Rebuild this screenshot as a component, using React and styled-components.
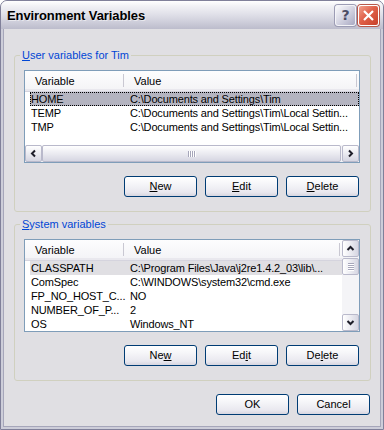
import React from "react";
import styled, { createGlobalStyle } from "styled-components";

const GlobalStyle = createGlobalStyle`
  html, body {
    margin: 0;
    padding: 0;
    background: #ffffff;
  }
  body {
    font-family: "Liberation Sans", Arial, sans-serif;
    font-size: 11px;
    color: #000;
  }
  * {
    box-sizing: border-box;
  }
`;

const Window = styled.div`
  width: 384px;
  height: 430px;
  display: flex;
  flex-direction: column;
  border: 1px solid #80809a;
  border-radius: 7px 7px 0 0;
  background: #cdcdd9;
  overflow: hidden;
`;

const TitleBar = styled.div`
  height: 28px;
  flex: none;
  display: flex;
  align-items: center;
  padding: 0 4px 0 6px;
  background: linear-gradient(
    to bottom,
    #ffffff 0%,
    #f1f1f5 18%,
    #e2e2ea 45%,
    #d0d0dc 72%,
    #bcbccc 100%
  );
`;

const Title = styled.div`
  flex: 1;
  font-size: 13px;
  font-weight: bold;
  color: #000;
  letter-spacing: -0.1px;
  text-shadow: 1px 1px 0 rgba(255, 255, 255, 0.5);
`;

const CaptionButton = styled.div`
  width: 21px;
  height: 21px;
  margin-left: 2px;
  display: flex;
  align-items: center;
  justify-content: center;
  border-radius: 3px;
  border: 1px solid ${(p) => (p.$close ? "#ffffff" : "#f4f4f8")};
  box-shadow: 0 0 0 1px ${(p) => (p.$close ? "#b8584a" : "#9c9cb4")};
  background: ${(p) =>
    p.$close
      ? "linear-gradient(135deg, #f2a08c 0%, #e0614a 45%, #c8402a 100%)"
      : "linear-gradient(135deg, #fafafc 0%, #d4d4e2 50%, #a9a9c2 100%)"};
  color: #4c4c64;
  font-family: "DejaVu Sans", sans-serif;
  font-weight: bold;
  font-size: 14px;
`;

const Body = styled.div`
  flex: 1;
  margin: 0 2px 2px;
  border: 1px solid #a6a6ba;
  border-top: none;
  background: #e0dfe3;
  padding: 19px 9px 0 10px;
  display: flex;
  flex-direction: column;
`;

const GroupBox = styled.fieldset`
  margin: 0;
  min-width: 0;
  height: 164px;
  padding: 8px 10px 14px 9px;
  border: 1px solid #d0d0bf;
  border-radius: 3px;
  display: flex;
  flex-direction: column;
  & + & {
    margin-top: 5px;
  }
`;

const Legend = styled.legend`
  margin-left: -4px;
  padding: 0 2px;
  line-height: 14px;
  font-size: 11px;
  color: #0046d5;
`;

const ListView = styled.div`
  height: 93px;
  flex: none;
  border: 1px solid #7f9db9;
  background: #ffffff;
  display: flex;
  flex-direction: ${(p) => (p.$vertical ? "row" : "column")};
  overflow: hidden;
`;

const Pane = styled.div`
  flex: 1;
  min-width: 0;
  display: flex;
  flex-direction: column;
`;

const Header = styled.div`
  height: 21px;
  flex: none;
  display: flex;
  background: linear-gradient(to bottom, #fdfdfe, #f3f3f6);
  border-bottom: 1px solid #d5d4de;
  box-shadow: inset 0 -2px 0 #e9e8ee;
`;

const HeaderCell = styled.div`
  position: relative;
  width: ${(p) => p.$w}px;
  flex: none;
  padding-left: 10px;
  line-height: 20px;
  &::after {
    content: "";
    position: absolute;
    right: 0;
    top: 3px;
    bottom: 4px;
    width: 1px;
    background: #c9c8d2;
  }
`;

const Rows = styled.div`
  flex: 1;
  overflow: hidden;
`;

const Row = styled.div`
  display: flex;
  height: 14px;
  line-height: 14px;
  margin-left: 5px;
  white-space: nowrap;
  letter-spacing: -0.15px;
  background: ${(p) =>
    p.$sel === "focus" ? "#b4b4c0" : p.$sel === "inactive" ? "#e0dfe3" : "transparent"};
  outline: ${(p) => (p.$sel === "focus" ? "1px dotted #000" : "none")};
  outline-offset: -1px;
`;

const Cell = styled.div`
  width: ${(p) => (p.$w ? `${p.$w}px` : "auto")};
  flex: ${(p) => (p.$w ? "none" : "1")};
  min-width: 0;
  padding-left: 1px;
  overflow: hidden;
  text-overflow: ellipsis;
`;

const ScrollBar = styled.div`
  flex: none;
  display: flex;
  flex-direction: ${(p) => (p.$vertical ? "column" : "row")};
  ${(p) => (p.$vertical ? "width: 17px;" : "height: 17px;")}
  background: #f4f4f7;
`;

const ScrollPart = styled.div`
  flex: none;
  width: ${(p) => (p.$grow && !p.$vertical ? "auto" : "17px")};
  height: ${(p) => (p.$grow && p.$vertical ? "auto" : "17px")};
  ${(p) => (p.$grow ? "flex: 1;" : "")}
  display: flex;
  align-items: center;
  justify-content: center;
  border: 1px solid #b9b9cb;
  border-radius: 2px;
  background: ${(p) =>
    p.$vertical
      ? "linear-gradient(to right, #ffffff, #ebebf1 50%, #d6d6e2)"
      : "linear-gradient(to bottom, #ffffff, #ebebf1 50%, #d6d6e2)"};
`;

const Track = styled.div`
  flex: 1;
`;

const ButtonRow = styled.div`
  display: flex;
  justify-content: flex-end;
  gap: 8px;
  margin-top: 13px;
  padding-right: 1px;
`;

const Button = styled.button`
  width: 73px;
  height: 21px;
  padding: 0;
  border: 1px solid #003c74;
  border-radius: 3px;
  background: linear-gradient(
    to bottom,
    #ffffff 0%,
    #f6f6f9 35%,
    #e9e8ef 80%,
    #d7d6e0 100%
  );
  font-family: inherit;
  font-size: 11px;
  color: #000;
  line-height: 19px;
`;

const Arrow = ({ dir }) => {
  const rot = { left: 180, right: 0, up: -90, down: 90 }[dir];
  return (
    <svg width="9" height="9" viewBox="0 0 9 9" style={{ transform: `rotate(${rot}deg)` }}>
      <path d="M3 1.5 L6 4.5 L3 7.5" fill="none" stroke="#1e1e2a" strokeWidth="2" />
    </svg>
  );
};

const Grip = ({ vertical }) => (
  <svg width="8" height="8" viewBox="0 0 8 8" style={{ transform: vertical ? "rotate(90deg)" : "none" }}>
    {[0, 2, 4, 6].map((x) => (
      <g key={x}>
        <rect x={x} y="1" width="1" height="6" fill="#a6a6ba" />
        <rect x={x + 1} y="1" width="1" height="6" fill="#ffffff" />
      </g>
    ))}
  </svg>
);

const userVars = [
  ["HOME", "C:\\Documents and Settings\\Tim", "focus"],
  ["TEMP", "C:\\Documents and Settings\\Tim\\Local Settin..."],
  ["TMP", "C:\\Documents and Settings\\Tim\\Local Settin..."],
];

const systemVars = [
  ["CLASSPATH", "C:\\Program Files\\Java\\j2re1.4.2_03\\lib\\...", "inactive"],
  ["ComSpec", "C:\\WINDOWS\\system32\\cmd.exe"],
  ["FP_NO_HOST_C...", "NO"],
  ["NUMBER_OF_P...", "2"],
  ["OS", "Windows_NT"],
];

function VarRows({ items }) {
  return (
    <Rows>
      {items.map(([name, value, sel]) => (
        <Row key={name} $sel={sel}>
          <Cell $w={99}>{name}</Cell>
          <Cell>{value}</Cell>
        </Row>
      ))}
    </Rows>
  );
}

function ListHeader({ valueWidth }) {
  return (
    <Header>
      <HeaderCell $w={99}>Variable</HeaderCell>
      <HeaderCell $w={valueWidth}>Value</HeaderCell>
    </Header>
  );
}

function VarButtons({ keys }) {
  return (
    <ButtonRow>
      <Button>{keys[0]}</Button>
      <Button>{keys[1]}</Button>
      <Button>{keys[2]}</Button>
    </ButtonRow>
  );
}

export default function App() {
  return (
    <>
      <GlobalStyle />
      <Window>
        <TitleBar>
          <Title>Environment Variables</Title>
          <CaptionButton>?</CaptionButton>
          <CaptionButton $close>
            <svg width="13" height="13" viewBox="0 0 13 13">
              <path d="M2 2 L11 11 M11 2 L2 11" stroke="#ffffff" strokeWidth="2.2" />
            </svg>
          </CaptionButton>
        </TitleBar>
        <Body>
          <GroupBox>
            <Legend>
              <u>U</u>ser variables for Tim
            </Legend>
            <ListView>
              <ListHeader valueWidth={233} />
              <VarRows items={userVars} />
              <ScrollBar>
                <ScrollPart>
                  <Arrow dir="left" />
                </ScrollPart>
                <ScrollPart $grow style={{ marginRight: 1 }}>
                  <Grip />
                </ScrollPart>
                <ScrollPart>
                  <Arrow dir="right" />
                </ScrollPart>
              </ScrollBar>
            </ListView>
            <VarButtons
              keys={[
                <><u>N</u>ew</>,
                <><u>E</u>dit</>,
                <><u>D</u>elete</>,
              ]}
            />
          </GroupBox>
          <GroupBox>
            <Legend>
              <u>S</u>ystem variables
            </Legend>
            <ListView $vertical>
              <Pane>
                <ListHeader valueWidth={216} />
                <VarRows items={systemVars} />
              </Pane>
              <ScrollBar $vertical>
                <ScrollPart $vertical>
                  <Arrow dir="up" />
                </ScrollPart>
                <ScrollPart $vertical style={{ marginTop: 1 }}>
                  <Grip vertical />
                </ScrollPart>
                <Track />
                <ScrollPart $vertical>
                  <Arrow dir="down" />
                </ScrollPart>
              </ScrollBar>
            </ListView>
            <VarButtons
              keys={[
                <>Ne<u>w</u></>,
                <>Ed<u>i</u>t</>,
                <>De<u>l</u>ete</>,
              ]}
            />
          </GroupBox>
          <ButtonRow>
            <Button>OK</Button>
            <Button>Cancel</Button>
          </ButtonRow>
        </Body>
      </Window>
    </>
  );
}
